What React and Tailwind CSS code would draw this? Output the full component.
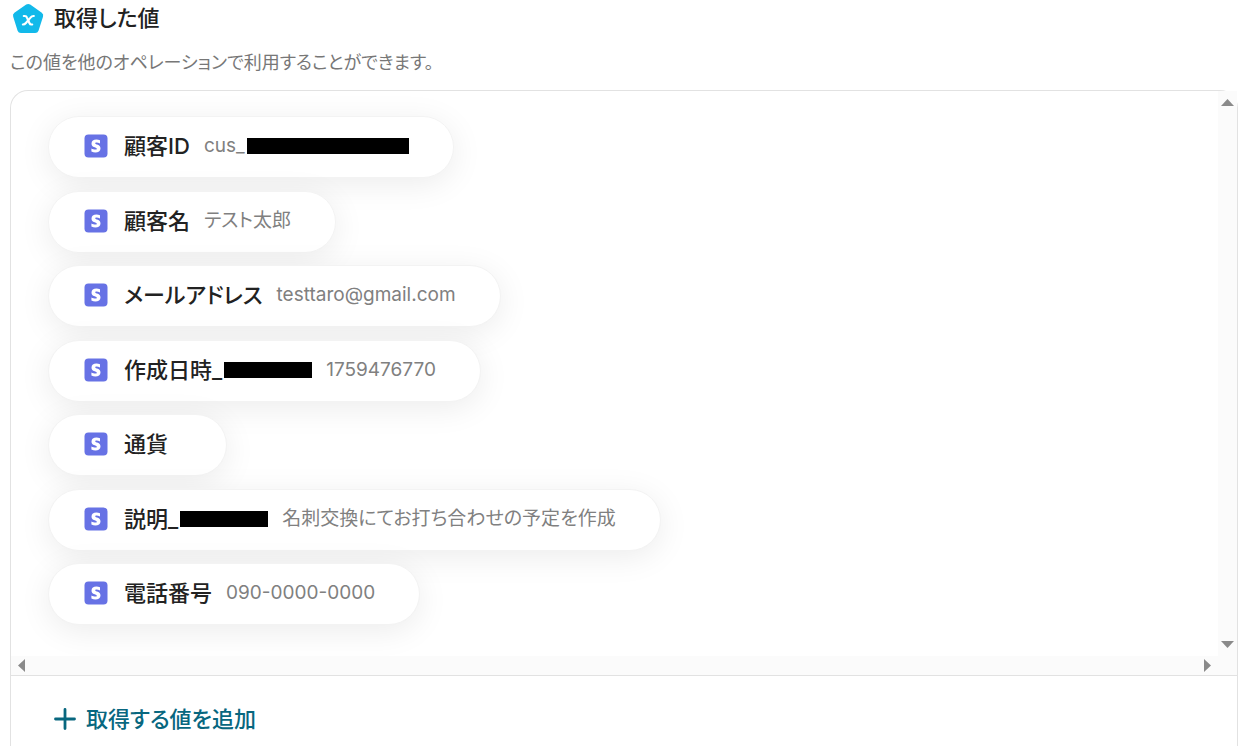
import React from "react";

const VALUES = [
  { id: "customer_id", label: "顧客ID", value: "cus_", maskedValue: true },
  { id: "customer_name", label: "顧客名", value: "テスト太郎" },
  { id: "email", label: "メールアドレス", value: "testtaro@gmail.com" },
  { id: "created_at", label: "作成日時_", maskedLabel: true, value: "1759476770" },
  { id: "currency", label: "通貨", value: "" },
  { id: "description", label: "説明_", maskedLabel: true, value: "名刺交換にてお打ち合わせの予定を作成" },
  { id: "phone", label: "電話番号", value: "090-0000-0000" },
];

function ValueIcon() {
  return (
    <svg className="w-8 h-8 shrink-0" viewBox="0 0 32 32" aria-hidden="true">
      <path
        d="M14.2 2.600a3.600 3.600 0 0 1 4 0l11.600 8.200a3.400 3.400 0 0 1 1.200 3.900l-4.500 14a3.500 3.500 0 0 1-3.300 2.400H8.900a3.500 3.500 0 0 1-3.300-2.400L1.200 14.700a3.400 3.400 0 0 1 1.200-3.900z"
        fill="#12b9ea"
      />
      <g fill="none" stroke="#fff" strokeWidth="2.2" strokeLinecap="round" strokeLinejoin="round">
        <path d="M11.800 14h1c1.200 0 1.800.6 2.200 1.600l2.400 5.400c.4 1 1 1.500 2 1.500h.8" />
        <path d="M21.800 14c-1.500-.1-2.500.6-3.300 1.600l-4.600 5.400c-.8 1-1.600 1.500-3 1.500" />
      </g>
    </svg>
  );
}

function StripeIcon() {
  return (
    <svg className="w-6 h-6 shrink-0" viewBox="0 0 24 24" aria-hidden="true">
      <rect x="0.500" y="0.500" width="23" height="23" rx="4" fill="#6772e5" />
      <path
        d="M11.200 9.300c0-.6.500-.8 1.200-.8 1.100 0 2.500.35 3.600.95V6.300a9.400 9.400 0 0 0-3.600-.7c-2.900 0-4.900 1.500-4.900 4.100 0 4 5.300 3.300 5.300 5 0 .7-.6.9-1.400.9-1.200 0-2.800-.5-4-1.200v3.200c1.300.6 2.700.8 4 .8 3 0 5.100-1.500 5.100-4 0-4.200-5.300-3.500-5.300-5.100z"
        fill="#fff"
      />
    </svg>
  );
}

function ScrollButton({ label, children }) {
  return (
    <button type="button" aria-label={label} className="flex items-center justify-center text-[#8a8a8a]">
      {children}
    </button>
  );
}

function ValuePill({ item }) {
  return (
    <li className="flex items-center w-fit h-[62px] pl-[35px] pr-11 pb-0.5 gap-4 rounded-full bg-white border border-[#f3f3f3] shadow-[0_6px_32px_rgba(0,0,0,0.08)]">
      <StripeIcon />
      <div className="flex items-center gap-3.5 whitespace-nowrap">
        <span className="flex items-center gap-0.5 text-[22px] leading-8 font-medium text-[#222]">
          {item.label}
          {item.maskedLabel && <span className="w-[88px] h-4 bg-black" />}
        </span>
        <span className="flex items-center gap-0.5 text-[19px] leading-8 text-[#808080]">
          {item.value}
          {item.maskedValue && <span className="w-[162px] h-4 bg-black" />}
        </span>
      </div>
    </li>
  );
}

export default function App() {
  return (
    <main className="min-h-screen flex flex-col pl-2.5 pr-[7px] bg-white font-['Inter','Noto_Sans_CJK_JP',sans-serif] [font-feature-settings:'palt']">
      <header className="flex flex-col gap-[15px] pb-[13px]">
        <h2 className="flex items-center gap-2.5 pl-0.5 pt-0.5 text-[22px] leading-8 font-medium text-[#222]">
          <ValueIcon />
          取得した値
        </h2>
        <p className="text-[18px] leading-7 text-[#777]">この値を他のオペレーションで利用することができます。</p>
      </header>

      <section className="grow flex flex-col rounded-t-[18px] border border-b-0 border-[#e2e2e2] bg-white">
        <div className="grid grid-cols-[1fr_19px] grid-rows-[565px_19px] rounded-tl-[18px] overflow-hidden border-b border-[#e2e2e2]">
          <ul className="flex flex-col justify-between items-start pt-[25px] pb-[31px] pl-[37px] overflow-hidden">
            {VALUES.map((item) => (
              <ValuePill key={item.id} item={item} />
            ))}
          </ul>
          <div className="flex flex-col justify-between py-2 bg-[#fbfbfb]">
            <ScrollButton label="上へスクロール">
              <svg className="w-[13px] h-[7px]" viewBox="0 0 13 7"><path d="M0 7 6.500 0 13 7z" fill="currentColor" /></svg>
            </ScrollButton>
            <ScrollButton label="下へスクロール">
              <svg className="w-[13px] h-[7px]" viewBox="0 0 13 7"><path d="M0 0h13L6.500 7z" fill="currentColor" /></svg>
            </ScrollButton>
          </div>
          <div className="flex items-center justify-between px-[7px] bg-[#fbfbfb]">
            <ScrollButton label="左へスクロール">
              <svg className="w-[7px] h-[13px]" viewBox="0 0 7 13"><path d="M7 0v13L0 6.500z" fill="currentColor" /></svg>
            </ScrollButton>
            <ScrollButton label="右へスクロール">
              <svg className="w-[7px] h-[13px]" viewBox="0 0 7 13"><path d="M0 0v13l7-6.500z" fill="currentColor" /></svg>
            </ScrollButton>
          </div>
          <div className="bg-[#fbfbfb]" />
        </div>

        <div className="px-[43px] pt-[27px]">
          <button type="button" className="flex items-center gap-2.5 text-[22px] leading-8 font-medium text-[#08677f]">
            <svg className="w-[22px] h-[22px]" viewBox="0 0 22 22" aria-hidden="true">
              <path d="M11 1.500v19M1.500 11h19" stroke="currentColor" strokeWidth="2.800" strokeLinecap="round" />
            </svg>
            取得する値を追加
          </button>
        </div>
      </section>
    </main>
  );
}
